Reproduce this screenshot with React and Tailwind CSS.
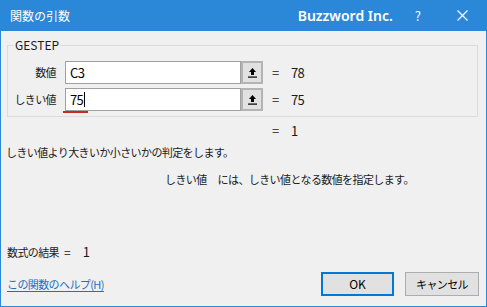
import React from "react";

const font = { fontFamily: '"Noto Sans CJK JP", "Noto Sans", sans-serif' };

const RefIcon = () => (
  <svg width="11" height="11" viewBox="0 0 11 11">
    <path d="M5.5 1 L9 5 H7 V8 H4 V5 H2 Z" fill="#000" />
    <rect x="1" y="9.5" width="9" height="1.2" fill="#000" />
  </svg>
);

const ArgRow = ({ label, value, result, underline }) => (
  <div className="flex items-center h-[23px]">
    <div className="w-[48px] text-right text-[11px] tracking-[-0.6px] text-[#1a1a1a] whitespace-nowrap">{label}</div>
    <div className="relative ml-[9px] flex h-full">
      <div className="w-[176px] h-full bg-white border border-[#a0a0a0] flex items-center pl-[4px] text-[13px] text-black">
        {value}
        {underline && <span className="ml-[1px] inline-block w-[1px] h-[15px] bg-black" />}
      </div>
      <div className="w-[22px] h-full bg-[#e1e1e1] border-2 border-[#b4b4b4] flex items-center justify-center">
        <RefIcon />
      </div>
      {underline && (
        <div className="absolute left-[-2px] bottom-[-2px] w-[25px] h-[2px] bg-[#c42b1c]" />
      )}
    </div>
    <div className="ml-[9px] text-[13px] text-[#1a1a1a] flex">
      <span className="w-[19px]">=</span>
      <span>{result}</span>
    </div>
  </div>
);

export default function App() {
  return (
    <div style={font} className="w-[487px] h-[307px] bg-[#2b88d8] flex flex-col">
      {/* Title bar */}
      <div className="h-[31px] flex items-center text-white shrink-0">
        <span className="ml-[10px] text-[12px]">関数の引数</span>
        <span className="ml-auto text-[14px] font-semibold" style={{ fontFamily: '"Noto Sans", sans-serif' }}>Buzzword Inc.</span>
        <span className="ml-[22px] text-[13px]">?</span>
        <svg className="ml-[36px] mr-[19px]" width="11" height="11" viewBox="0 0 11 11">
          <path d="M0.5 0.5 L10.5 10.5 M10.5 0.5 L0.5 10.5" stroke="#fff" strokeWidth="1.2" />
        </svg>
      </div>

      {/* Body */}
      <div className="flex-1 mx-[1px] mb-[1px] bg-[#f0f0f0] flex flex-col text-[11px] tracking-[-0.6px] text-[#1a1a1a]">
        <fieldset className="mt-[7px] ml-[6px] mr-[8px] h-[79px] border border-[#dcdcdc] px-[8px] pt-0 pb-0">
          <legend className="ml-[-2px] px-[1px] text-[12px] tracking-normal leading-[14px]">GESTEP</legend>
          <div className="flex flex-col gap-[4px] mt-[9px] ml-[-8px]">
            <ArgRow label="数値" value="C3" result="78" />
            <ArgRow label="しきい値" value="75" result="75" underline />
          </div>
        </fieldset>

        <div className="mt-[5px] ml-[271px] text-[13px] tracking-normal flex h-[18px] items-center">
          <span className="w-[19px]">=</span>
          <span>1</span>
        </div>
        <div className="ml-[5px] mt-[3px] h-[18px] flex items-center">しきい値より大きいか小さいかの判定をします。</div>
        <div className="ml-[164px] mt-[9px] h-[18px] flex items-center">
          <span>しきい値</span>
          <span className="ml-[11px]">には、しきい値となる数値を指定します。</span>
        </div>

        <div className="ml-[6px] mt-[55px] h-[18px] flex items-center">
          <span>数式の結果</span>
          <span className="ml-[5px] text-[12px] tracking-normal">=</span>
          <span className="ml-[12px] text-[13px] tracking-normal">1</span>
        </div>

        <div className="mt-[11px] flex items-center">
          <span className="ml-[6px] text-[#1e6fc0] underline underline-offset-2">この関数のヘルプ(H)</span>
          <button className="ml-auto w-[73px] h-[24px] bg-[#e1e1e1] border-2 border-[#0078d7] text-[12px] tracking-normal text-black">OK</button>
          <button className="ml-[11px] mr-[7px] w-[74px] h-[24px] bg-[#e1e1e1] border border-[#adadad] text-[11px] text-black">キャンセル</button>
        </div>
      </div>
    </div>
  );
}
